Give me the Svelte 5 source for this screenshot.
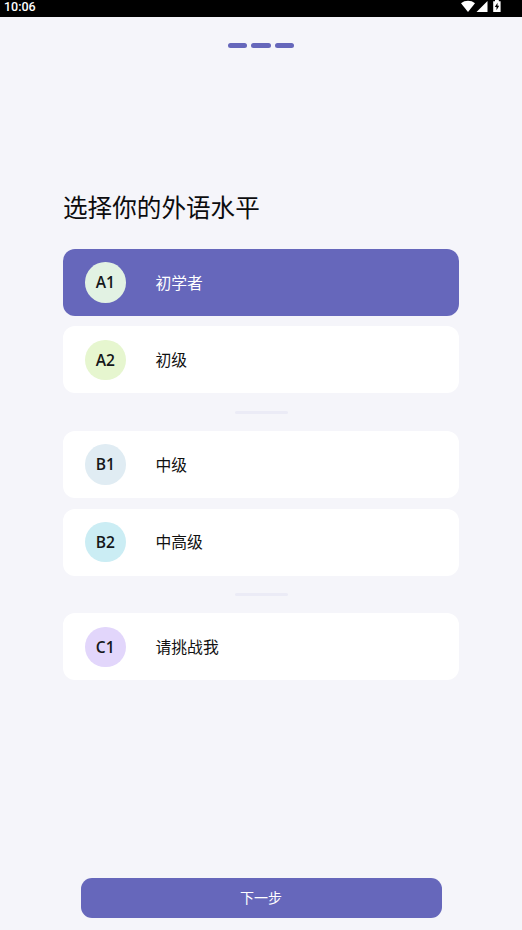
<script lang="ts">
    let selected = $state("A1");

    const groups = [
        [
            { code: "A1", label: "初学者", color: "#e2f2e3" },
            { code: "A2", label: "初级", color: "#e6f6cf" }
        ],
        [
            { code: "B1", label: "中级", color: "#e0ecf3" },
            { code: "B2", label: "中高级", color: "#cbedf4" }
        ],
        [{ code: "C1", label: "请挑战我", color: "#e2d6fb" }]
    ];
</script>

<div class="screen">
    <header class="status-bar">
        <span class="time">10:06</span>
        <svg class="status-icons" width="42" height="14" viewBox="0 0 42 14" fill="#fff">
            <path d="M0 3.3C4 0 10 0 14 3.3L7 12Z" />
            <path d="M26.5 1V12H15.5Z" />
            <path d="M34 1.2V0H37.8V1.2H39.6V12H32.2V1.2Z" />
            <path d="M36.5 2.8 33.8 7H35.5V10.2L38.2 5.8H36.5Z" fill="#000" />
        </svg>
    </header>

    <div class="steps">
        <span></span>
        <span></span>
        <span></span>
    </div>

    <main>
        <h1>选择你的外语水平</h1>
        <div class="levels">
            {#each groups as group, i}
                {#if i > 0}
                    <div class="divider"></div>
                {/if}
                <div class="group">
                    {#each group as level}
                        <button
                            class="level"
                            class:selected={selected === level.code}
                            onclick={() => (selected = level.code)}
                        >
                            <span class="badge" style="background-color: {level.color}">{level.code}</span>
                            <span class="label">{level.label}</span>
                        </button>
                    {/each}
                </div>
            {/each}
        </div>
    </main>

    <button class="next">下一步</button>
</div>

<style>
    .screen {
        display: flex;
        flex-direction: column;
        box-sizing: border-box;
        height: 930px;
        padding-bottom: 12px;
        background: #f5f5fa;
        font-family: "Noto Sans", "Noto Sans CJK SC", sans-serif;
        overflow: hidden;
    }

    button {
        border: none;
        padding: 0;
        font-family: "Noto Sans CJK SC", sans-serif;
        cursor: pointer;
    }

    .status-bar {
        display: flex;
        justify-content: space-between;
        align-items: flex-start;
        height: 17px;
        padding: 0 19px 0 4px;
        background: #000;
        color: #fff;
    }

    .time {
        font: 500 12.5px/14px Roboto, sans-serif;
    }

    .steps {
        display: flex;
        justify-content: center;
        gap: 4.2px;
        margin-top: 26px;
    }

    .steps span {
        width: 19.5px;
        height: 5px;
        border-radius: 2.5px;
        background: #6667bb;
    }

    main {
        margin: 138px 63px 0;
    }

    h1 {
        margin: 0 0 23px;
        font-family: "Noto Sans CJK SC", sans-serif;
        font-size: 24.6px;
        font-weight: 400;
        line-height: 40px;
        color: #0c0c0e;
    }

    .group {
        display: flex;
        flex-direction: column;
        gap: 10.4px;
    }

    .level {
        display: flex;
        align-items: center;
        gap: 30px;
        height: 67px;
        padding-left: 22px;
        border-radius: 12px;
        background: #fff;
        color: #111;
    }

    .level.selected {
        background: #6667bb;
        color: #fff;
    }

    .badge {
        width: 40.5px;
        height: 40.5px;
        border-radius: 50%;
        font: 600 15.6px/41.4px "Open Sans", "Noto Sans", sans-serif;
        text-align: center;
        color: #15181a;
    }

    .label {
        font-size: 15.8px;
        line-height: 24px;
    }

    .divider {
        width: 53px;
        height: 3px;
        margin: 17.4px auto;
        border-radius: 1.5px;
        background: #ebebf6;
    }

    .next {
        height: 40px;
        margin: auto 80px 0 81px;
        padding: 0 1px 3px 0;
        border-radius: 11px;
        background: #6667bb;
        color: #fff;
        font-size: 14px;
        line-height: 20px;
    }
</style>
